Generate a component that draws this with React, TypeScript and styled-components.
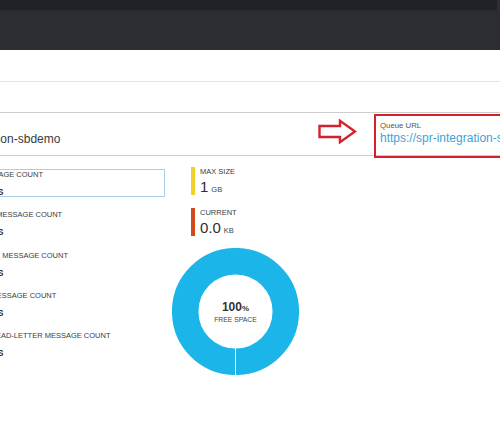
import styled, { createGlobalStyle } from "styled-components";

const GlobalStyle = createGlobalStyle`
  html, body {
    margin: 0;
    padding: 0;
    background: #fff;
    overflow: hidden;
    font-family: "Liberation Sans", Arial, sans-serif;
  }
`;

const Page = styled.div`
  width: 500px;
  height: 425px;
  overflow: hidden;
  display: flex;
  flex-direction: column;
`;

const TopStrip = styled.div`
  height: 10px;
  background: #1f2226;
  border-right: 3px solid #2c3035;
`;

const NavBar = styled.div`
  height: 40px;
  background: #2a2d31;
`;

const ToolbarRow = styled.div`
  height: 31px;
  border-bottom: 1px solid #e3e3e3;
`;

const CommandRow = styled.div`
  height: 30px;
  border-bottom: 1px solid #cdcdcd;
`;

const HeaderRow = styled.div`
  height: 42px;
  border-bottom: 1px solid #cdcdcd;
  display: flex;
  align-items: flex-start;
  justify-content: space-between;
  white-space: nowrap;
`;

const Title = styled.div`
  margin-left: -63px;
  padding-top: 19px;
  font-size: 12px;
  line-height: 14px;
  color: #3a3a3a;
`;

const UrlGroup = styled.div`
  display: flex;
  align-items: flex-start;
  gap: 17px;
`;

const Arrow = styled.svg`
  margin-top: 6px;
  width: 39px;
  height: 25px;
`;

const UrlBox = styled.div`
  margin-top: 1px;
  width: 126px;
  height: 44px;
  box-sizing: border-box;
  border: 2px solid #d3222c;
  border-right: none;
  padding: 5px 0 0 4px;
  overflow: hidden;
`;

const UrlLabel = styled.div`
  font-size: 7.8px;
  line-height: 9px;
  color: #555;
`;

const UrlLink = styled.div`
  margin-top: 1px;
  font-size: 12px;
  line-height: 14px;
  color: #3da3d8;
`;

const Body = styled.div`
  display: flex;
  align-items: flex-start;
  padding-top: 11px;
`;

const CountList = styled.div`
  margin-left: -59px;
  padding-top: 2px;
  width: 224px;
  flex-shrink: 0;
  display: flex;
  flex-direction: column;
  white-space: nowrap;
`;

const CountItem = styled.div<{ $selected?: boolean }>`
  height: 28px;
  box-sizing: border-box;
  margin-bottom: 12.25px;
  padding-left: 6px;
  border: 1px solid ${(p) => (p.$selected ? "#a9d0e8" : "transparent")};
`;

const CountLabel = styled.div`
  font-size: 7.5px;
  line-height: 10px;
  color: #3c3c3c;
`;

const CountValue = styled.div`
  margin-top: 6px;
  margin-left: -3px;
  font-size: 9px;
  font-weight: 700;
  line-height: 12px;
  color: #333;
`;

const SizeColumn = styled.div`
  margin-left: 7px;
  width: 127px;
  display: flex;
  flex-direction: column;
`;

const Stat = styled.div`
  display: flex;
  gap: 5px;
  margin-left: 19px;
  margin-bottom: 10px;
`;

const StatBar = styled.div<{ $color: string }>`
  width: 4px;
  height: 28px;
  background: ${(p) => p.$color};
`;

const StatText = styled.div`
  display: flex;
  flex-direction: column;
`;

const StatLabel = styled.div`
  font-size: 7.5px;
  line-height: 10px;
  color: #3c3c3c;
`;

const StatValue = styled.div`
  font-size: 15px;
  line-height: 17px;
  color: #2e2e2e;
  margin-top: 1px;
`;

const Unit = styled.span`
  font-size: 7.5px;
  margin-left: 3px;
  color: #444;
`;

const Donut = styled.div`
  margin-top: -1px;
  width: 127px;
  height: 127px;
  display: grid;
  place-items: center;
  & > * {
    grid-area: 1 / 1;
  }
`;

const DonutCenter = styled.div`
  display: flex;
  flex-direction: column;
  align-items: center;
  padding-top: 2px;
`;

const Percent = styled.div`
  font-size: 12px;
  line-height: 13px;
  font-weight: 600;
  color: #333;
  span {
    font-size: 8px;
  }
`;

const FreeLabel = styled.div`
  font-size: 6.8px;
  line-height: 9px;
  color: #444;
`;

const counts = [
  "ACTIVE MESSAGE COUNT",
  "SCHEDULED MESSAGE COUNT",
  "DEAD-LETTER MESSAGE COUNT",
  "TRANSFER MESSAGE COUNT",
  "TRANSFER DEAD-LETTER MESSAGE COUNT",
];

export default function App() {
  return (
    <>
      <GlobalStyle />
      <Page>
        <TopStrip />
        <NavBar />
        <ToolbarRow />
        <CommandRow />
        <HeaderRow>
          <Title>spr-integration-sbdemo</Title>
          <UrlGroup>
            <Arrow viewBox="0 0 39 25">
              <path
                d="M1.5 7 H22 V1.8 L37 12.5 L22 23.2 V18 H1.5 Z"
                fill="#fff"
                stroke="#d3222c"
                strokeWidth="2.4"
                strokeLinejoin="miter"
              />
            </Arrow>
            <UrlBox>
              <UrlLabel>Queue URL</UrlLabel>
              <UrlLink>https://spr-integration-sbdemo.servicebus.windows.net/</UrlLink>
            </UrlBox>
          </UrlGroup>
        </HeaderRow>
        <Body>
          <CountList>
            {counts.map((c, i) => (
              <CountItem key={c} $selected={i === 0}>
                <CountLabel>{c}</CountLabel>
                <CountValue>0 MESSAGES</CountValue>
              </CountItem>
            ))}
          </CountList>
          <SizeColumn>
            <Stat>
              <StatBar $color="#f2d02c" />
              <StatText>
                <StatLabel>MAX SIZE</StatLabel>
                <StatValue>
                  1<Unit>GB</Unit>
                </StatValue>
              </StatText>
            </Stat>
            <Stat>
              <StatBar $color="#d24a1c" />
              <StatText>
                <StatLabel>CURRENT</StatLabel>
                <StatValue>
                  0.0<Unit>KB</Unit>
                </StatValue>
              </StatText>
            </Stat>
            <Donut>
              <svg width="127" height="127" viewBox="0 0 127 127">
                <circle cx="63.5" cy="63.5" r="50.3" fill="none" stroke="#1cb5ea" strokeWidth="26.5" />
                <line x1="63.5" y1="99" x2="63.5" y2="127" stroke="#fff" strokeWidth="1" />
              </svg>
              <DonutCenter>
                <Percent>
                  100<span>%</span>
                </Percent>
                <FreeLabel>FREE SPACE</FreeLabel>
              </DonutCenter>
            </Donut>
          </SizeColumn>
        </Body>
      </Page>
    </>
  );
}
